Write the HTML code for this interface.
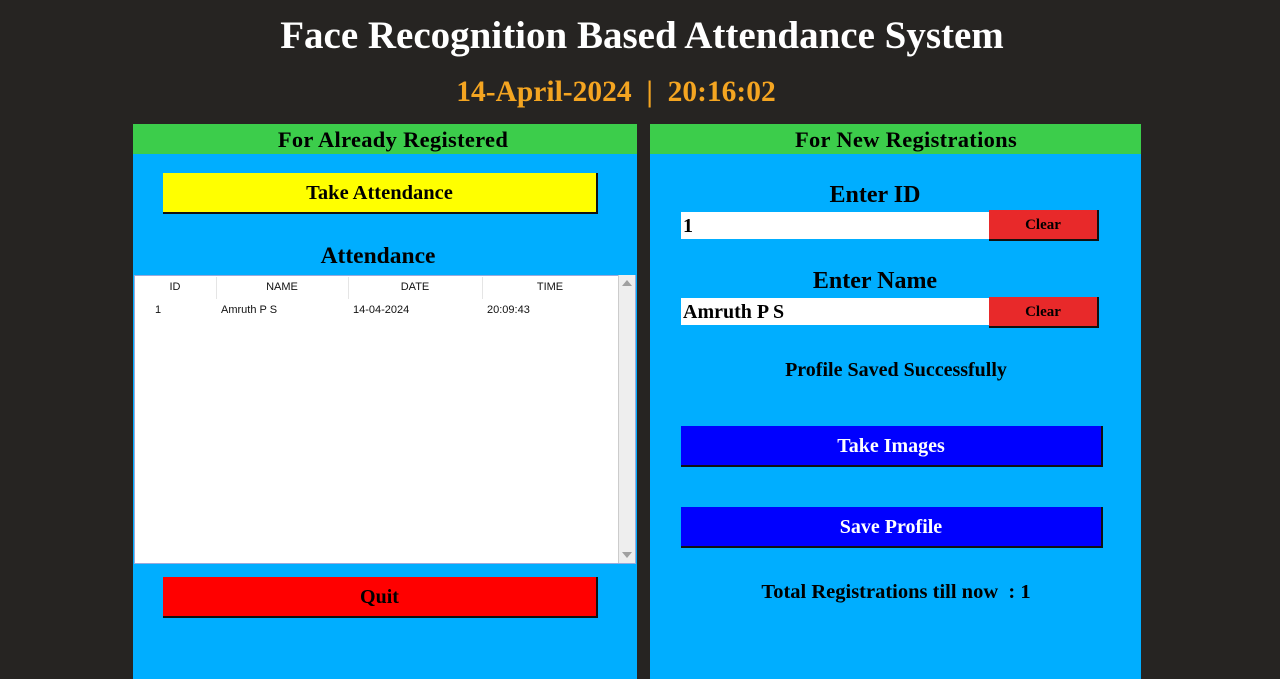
<!DOCTYPE html>
<html><head><style>
*{margin:0;padding:0;box-sizing:border-box}
body{width:1280px;height:679px;background:#262422;position:relative;overflow:hidden;font-family:"Liberation Serif",serif;font-weight:bold}
.a{position:absolute}
.c{text-align:center}
.btn{position:absolute;border-right:2px solid #111;border-bottom:2px solid #111;text-align:center}
.s{font-family:"Liberation Sans",sans-serif;font-weight:normal;font-size:11px;color:#111}
</style></head><body>
<div class="a c" style="left:0;width:1284px;top:13px;font-size:39px;color:#fff;line-height:46px">Face Recognition Based Attendance System</div>
<div class="a c" style="left:0;width:1232px;top:75px;font-size:29.5px;color:#f4a521;line-height:34px">14-April-2024 &nbsp;|&nbsp; 20:16:02</div>

<div class="a" style="left:133px;top:124px;width:504px;height:555px;background:#00aeff"></div>
<div class="a" style="left:133px;top:124px;width:504px;height:30px;background:#3ccd4b"></div>
<div class="a c" style="left:133px;top:124px;width:520px;height:30px;font-size:22.5px;line-height:31px;color:#000;letter-spacing:0.3px">For Already Registered</div>
<div class="btn" style="left:163px;top:173px;width:435px;height:41px;background:#ffff00;font-size:20.5px;line-height:41px">Take Attendance</div>
<div class="a c" style="left:133px;top:242px;width:490px;font-size:23.5px;line-height:28px;color:#000">Attendance</div>
<div class="a" style="left:134px;top:275px;width:502px;height:289px;background:#fff;border:1px solid #9ad"></div>
<div class="a" style="left:618px;top:275px;width:17px;height:288px;background:#eee;border-left:1px solid #ccc"></div>
<div class="a" style="left:622px;top:280px;width:0;height:0;border:5px solid transparent;border-bottom:6px solid #a0a0a0;border-top:none"></div>
<div class="a" style="left:622px;top:552px;width:0;height:0;border:5px solid transparent;border-top:6px solid #a0a0a0;border-bottom:none"></div>
<div class="a" style="left:216px;top:277px;width:1px;height:22px;background:#e5e5e5"></div>
<div class="a" style="left:348px;top:277px;width:1px;height:22px;background:#e5e5e5"></div>
<div class="a" style="left:482px;top:277px;width:1px;height:22px;background:#e5e5e5"></div>
<div class="a s c" style="left:134px;width:82px;top:281px">ID</div>
<div class="a s c" style="left:216px;width:132px;top:281px">NAME</div>
<div class="a s c" style="left:348px;width:134px;top:281px">DATE</div>
<div class="a s c" style="left:482px;width:136px;top:281px">TIME</div>
<div class="a s" style="left:155px;top:304px">1</div>
<div class="a s" style="left:221px;top:304px">Amruth P S</div>
<div class="a s" style="left:353px;top:304px">14-04-2024</div>
<div class="a s" style="left:487px;top:304px">20:09:43</div>
<div class="btn" style="left:163px;top:577px;width:435px;height:41px;background:#ff0000;font-size:20px;line-height:41px">Quit</div>

<div class="a" style="left:650px;top:124px;width:491px;height:555px;background:#00aeff"></div>
<div class="a" style="left:650px;top:124px;width:491px;height:30px;background:#3ccd4b"></div>
<div class="a c" style="left:650px;top:124px;width:512px;height:30px;font-size:22.5px;line-height:31px;color:#000;letter-spacing:0.3px">For New Registrations</div>
<div class="a c" style="left:650px;width:450px;top:181px;font-size:24px;line-height:28px">Enter ID</div>
<div class="a" style="left:681px;top:212px;width:308px;height:27px;background:#fff;font-size:20px;line-height:28px;padding-left:2px">1</div>
<div class="btn" style="left:989px;top:210px;width:110px;height:31px;background:#e8292a;font-size:15px;line-height:31px">Clear</div>
<div class="a c" style="left:650px;width:450px;top:267px;font-size:24px;line-height:28px">Enter Name</div>
<div class="a" style="left:681px;top:298px;width:308px;height:27px;background:#fff;font-size:20px;line-height:28px;padding-left:2px">Amruth P S</div>
<div class="btn" style="left:989px;top:297px;width:110px;height:31px;background:#e8292a;font-size:15px;line-height:31px">Clear</div>
<div class="a c" style="left:650px;width:492px;top:358px;font-size:20px;line-height:24px">Profile Saved Successfully</div>
<div class="btn" style="left:681px;top:426px;width:422px;height:41px;background:#0000ff;color:#fff;font-size:20px;line-height:41px">Take Images</div>
<div class="btn" style="left:681px;top:507px;width:422px;height:41px;background:#0000ff;color:#fff;font-size:20px;line-height:41px">Save Profile</div>
<div class="a c" style="left:650px;width:492px;top:580px;font-size:20.5px;line-height:24px">Total Registrations till now &nbsp;: 1</div>
</body></html>
